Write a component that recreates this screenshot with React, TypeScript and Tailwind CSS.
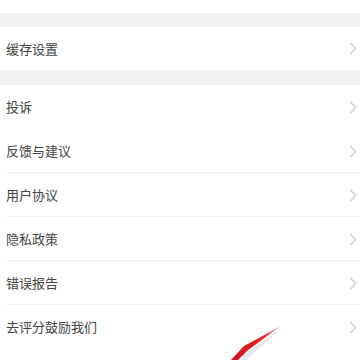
const GROUP_A = ["缓存设置"];
const GROUP_B = ["投诉", "反馈与建议", "用户协议", "隐私政策", "错误报告", "去评分鼓励我们"];

function Chevron() {
  return (
    <svg width="8" height="13" viewBox="0 0 8 13" fill="none">
      <polyline points="1.5,1 6.5,6.5 1.5,12" stroke="#cfcfcf" strokeWidth="1.3" strokeLinecap="round" strokeLinejoin="round" />
    </svg>
  );
}

function Row({ label, divider, h }: { label: string; divider?: boolean; h: string }) {
  return (
    <div className={`relative flex items-center justify-between bg-white pl-[6px] pr-[3px] ${h}`}>
      <span className="text-[13px] text-[#444444]">{label}</span>
      <Chevron />
      {divider && <div className="absolute bottom-0 left-[6px] right-0 h-px bg-[#f0f0f0]" />}
    </div>
  );
}

export default function App() {
  return (
    <div
      className="relative h-[360px] w-[360px] overflow-hidden bg-white"
      style={{ fontFamily: '"Noto Sans CJK SC", "Noto Sans", sans-serif' }}
    >
      <div className="h-[13px] bg-white" />
      <div className="h-[14px] bg-[#f2f2f2]" />
      {GROUP_A.map((l) => (
        <Row key={l} label={l} h="h-[43px]" />
      ))}
      <div className="h-[15px] bg-[#f2f2f2]" />
      {GROUP_B.map((l, i) => (
        <Row key={l} label={l} h="h-[44px]" divider={i > 0 && i < GROUP_B.length - 1} />
      ))}

      <svg className="pointer-events-none absolute left-0 top-0" width="360" height="360" viewBox="0 0 360 360">
        <defs>
          <linearGradient id="stroke" x1="281" y1="327" x2="236" y2="360" gradientUnits="userSpaceOnUse">
            <stop offset="0" stopColor="#f3b0b0" />
            <stop offset="0.35" stopColor="#e8232a" />
            <stop offset="1" stopColor="#d8101a" />
          </linearGradient>
        </defs>
        <polygon points="282,328 255,352 246,360 240,360 250,349" fill="#d9d9e0" opacity="0.6" />
        <polygon points="281,326 248,350 238,360 231,360 244,346" fill="url(#stroke)" />
      </svg>
    </div>
  );
}
